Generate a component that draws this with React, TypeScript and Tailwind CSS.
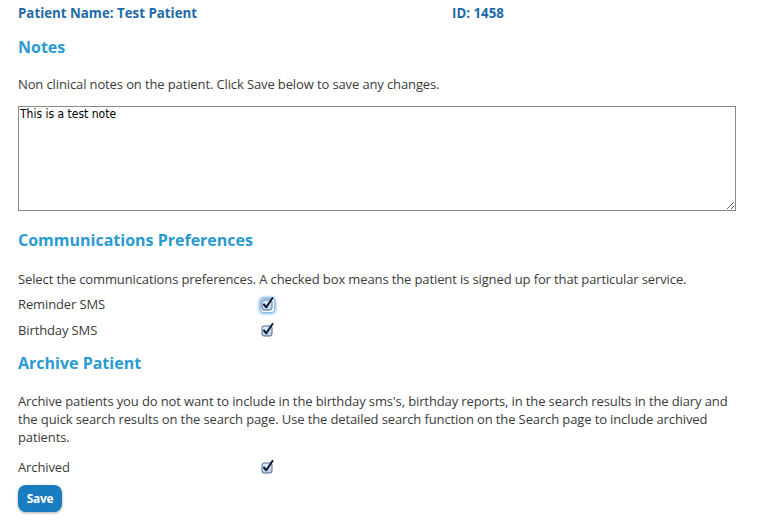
import React from "react";

function Check({ focused = false }: { focused?: boolean }) {
  return (
    <span
      className={`inline-flex h-[13px] w-[13px] items-center justify-center rounded-[3px] ${
        focused ? "shadow-[0_0_3px_2px_rgba(80,150,230,0.75)]" : ""
      }`}
    >
      <svg width="13" height="14" viewBox="0 0 13 14" className="-mt-[2px]">
        <defs>
          <linearGradient id="cbg" x1="0" y1="0" x2="0" y2="1">
            <stop offset="0" stopColor="#e8f0fa" />
            <stop offset="1" stopColor="#b9cde6" />
          </linearGradient>
        </defs>
        <rect x="1" y="3" width="10" height="10" rx="2" fill="url(#cbg)" stroke="#4a6a93" strokeWidth="1" />
        <path d="M3 7.5 L5.3 10.3 L11.5 1" fill="none" stroke="#0e1a33" strokeWidth="2" strokeLinecap="round" strokeLinejoin="round" />
      </svg>
    </span>
  );
}

function Heading({ children }: { children: React.ReactNode }) {
  return <h2 className="text-[16px] font-bold leading-[22px] tracking-normal text-[#2a9ad2]">{children}</h2>;
}

function Row({ label, focused }: { label: string; focused?: boolean }) {
  return (
    <div className="flex h-[26px] items-center">
      <span className="w-[243px]">{label}</span>
      <Check focused={focused} />
    </div>
  );
}

export default function App() {
  return (
    <div
      className="min-h-[531px] w-[761px] bg-white px-[18px] pt-[5px] text-[13px] tracking-[-0.12px] text-[#3b3b3b]"
      style={{ fontFamily: '"Open Sans", sans-serif' }}
    >
      <div className="flex h-[17px] items-center text-[13.3px] font-bold tracking-normal text-[#1d6aa8]">
        <span className="w-[434px]">Patient Name: Test Patient</span>
        <span>ID: 1458</span>
      </div>

      <div className="mt-[14px]">
        <Heading>Notes</Heading>
      </div>
      <p className="mt-[17px] leading-[18px]">
        Non clinical notes on the patient. Click Save below to save any changes.
      </p>
      <textarea
        defaultValue="This is a test note"
        className="mt-[13px] block h-[105px] w-[718px] resize border border-[#8a8a8a] px-[1px] py-0 text-[12px] leading-[15px] tracking-normal text-black"
        style={{ fontFamily: '"DejaVu Sans Condensed", "DejaVu Sans", sans-serif' }}
      />

      <div className="mt-[18px]">
        <Heading>Communications Preferences</Heading>
      </div>
      <p className="mt-[19px] leading-[18px]">
        Select the communications preferences. A checked box means the patient is signed up for that particular
        service.
      </p>
      <div className="mt-[4px]">
        <Row label="Reminder SMS" focused />
        <Row label="Birthday SMS" />
      </div>

      <div className="mt-[8px]">
        <Heading>Archive Patient</Heading>
      </div>
      <p className="mt-[18px] leading-[18px]">
        Archive patients you do not want to include in the birthday sms's, birthday reports, in the search results
        in the diary and the quick search results on the search page. Use the detailed search function on the Search
        page to include archived patients.
      </p>
      <div className="mt-[9px]">
        <Row label="Archived" />
      </div>
      <button className="mt-[4px] h-[27px] w-[44px] rounded-[8px] bg-[#1a7cc0] text-[12px] font-bold tracking-[-0.3px] text-white shadow-[0_1px_3px_rgba(0,0,0,0.35)]">
        Save
      </button>
    </div>
  );
}
